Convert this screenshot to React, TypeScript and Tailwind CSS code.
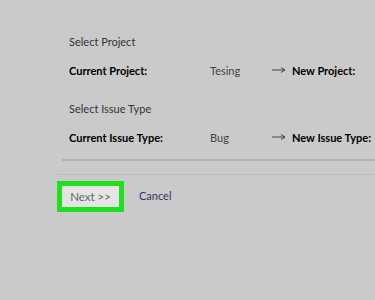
import React from "react";

const rows = [
  { heading: "Select Project", label: "Current Project", value: "Tesing", next: "New Project" },
  { heading: "Select Issue Type", label: "Current Issue Type", value: "Bug", next: "New Issue Type" },
];

const Arrow = () => (
  <svg width="14" height="8" viewBox="0 0 14 8" className="mb-[3px]">
    <path d="M0 4H13M9 1.5L13 4L9 6.5" fill="none" stroke="#333" strokeWidth="0.9" />
  </svg>
);

export default function App() {
  return (
    <div className="h-[300px] w-[375px] overflow-hidden bg-[#cacaca] font-['Lato',sans-serif] text-[11px] text-[#222]">
      <div className="pl-[69px] pt-[34px]">
        {rows.map((r) => (
          <div key={r.heading} className="mb-[22px]">
            <div className="h-[16px] leading-[16px] text-[#333]">{r.heading}</div>
            <div className="mt-[13px] flex h-[16px] items-center leading-[16px] whitespace-nowrap">
              <span className="w-[141px] font-bold text-black">{r.label}:</span>
              <span className="w-[62px] text-[#444]">{r.value}</span>
              <span className="flex w-[20px] items-center"><Arrow /></span>
              <span className="font-bold text-black">{r.next}:</span>
            </div>
          </div>
        ))}
      </div>
      <div className="ml-[62px] mt-[-9px] border-t-2 border-[#b3b3b3]" />
      <div className="ml-[57px] mt-[13px] border-t border-[#bdbdbd]" />
      <div className="ml-[57px] mt-[6px] flex items-center gap-[15px]">
        <div className="border-[5px] border-[#1fe01f]">
          <button className="h-[21px] w-[57px] bg-[#e4e4e4] text-[11.5px] leading-[21px] text-[#666]">
            Next &gt;&gt;
          </button>
        </div>
        <span className="text-[11px] text-[#34346e]">Cancel</span>
      </div>
    </div>
  );
}
